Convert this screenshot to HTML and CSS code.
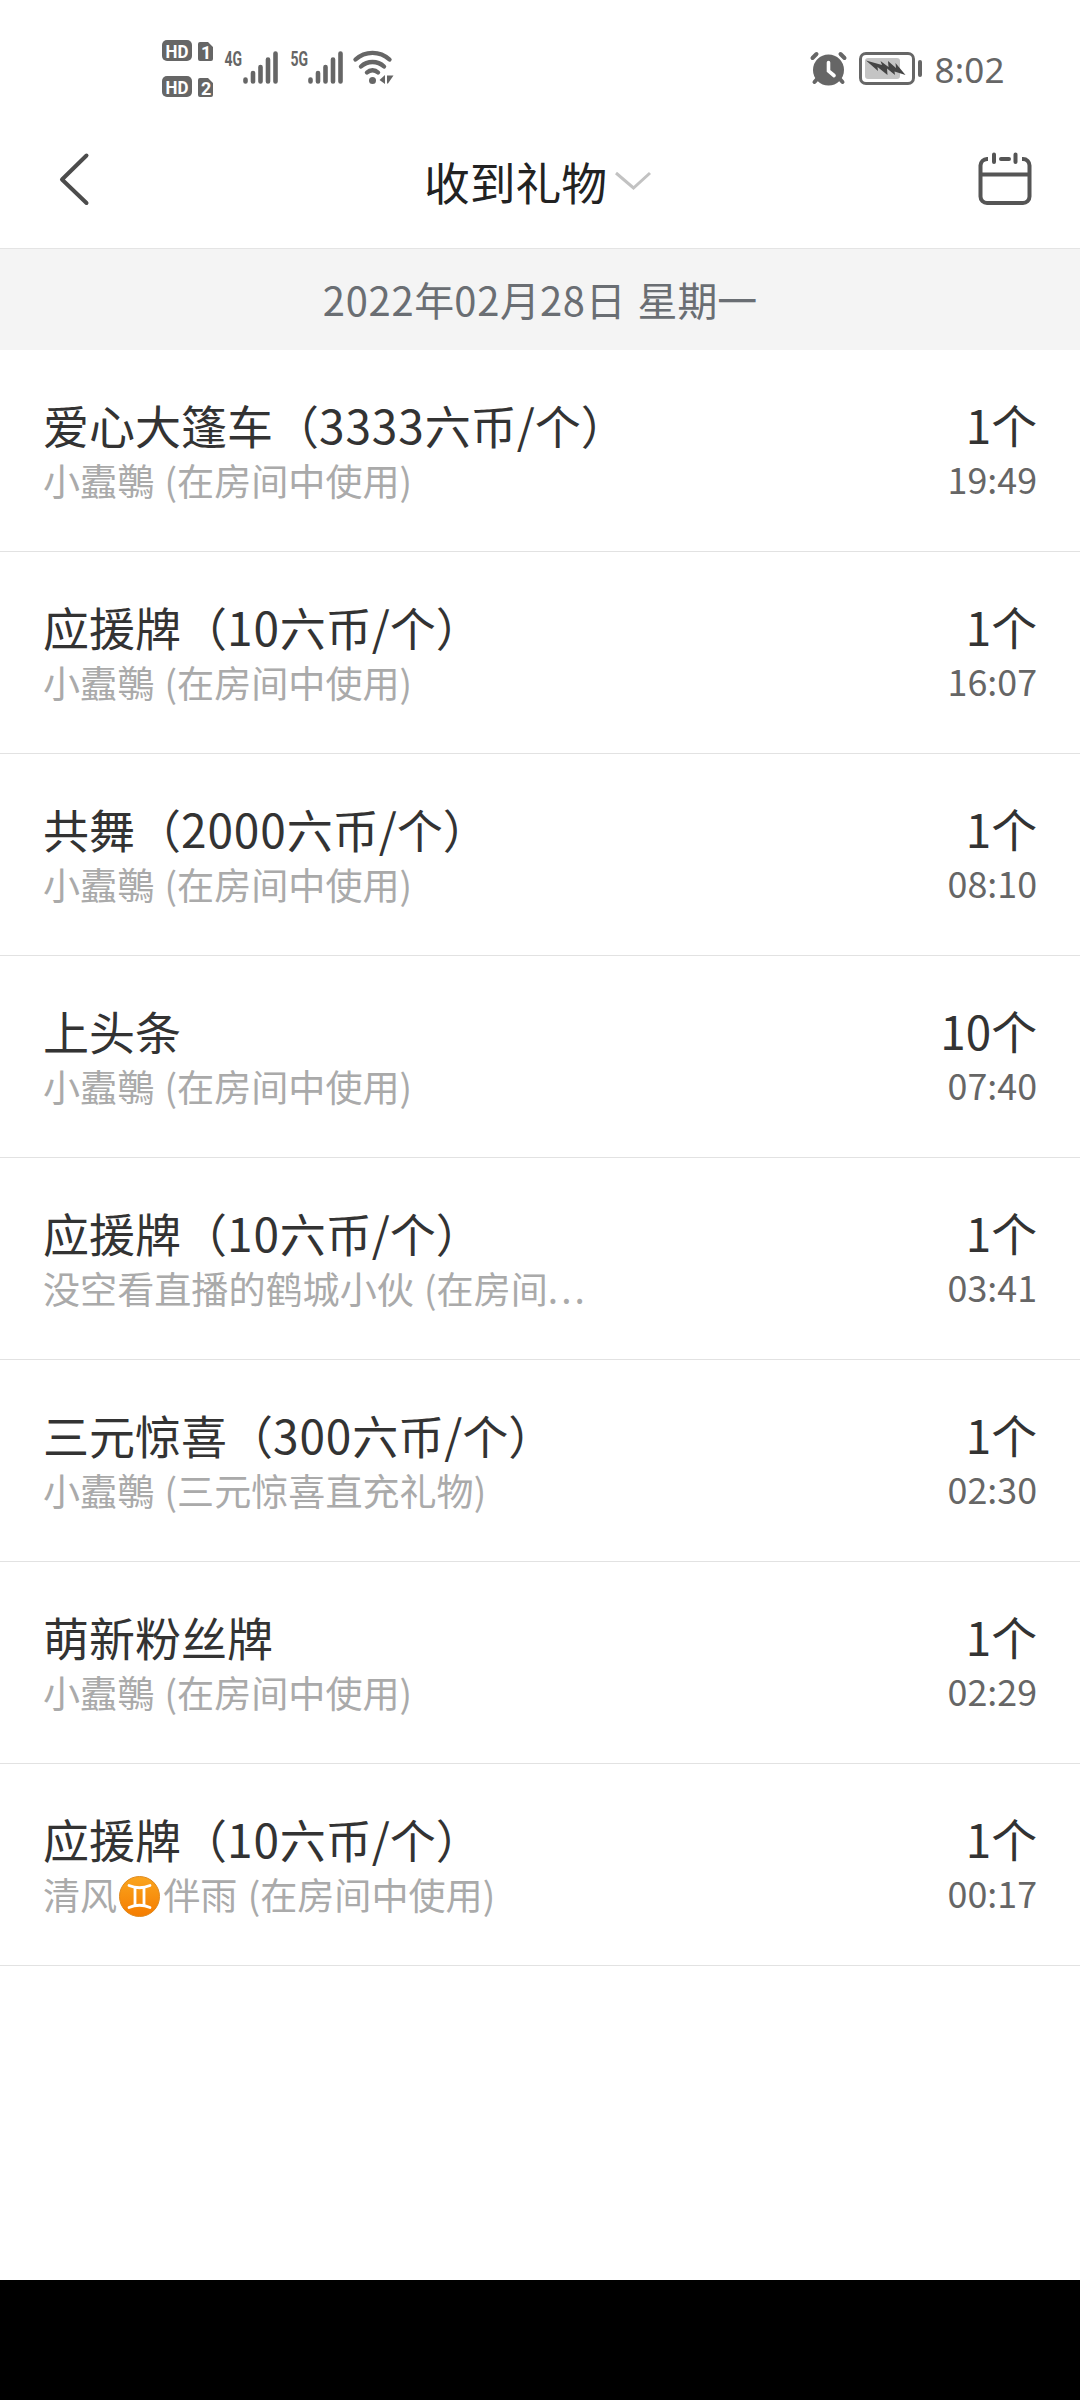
FILE: index.html
```html
<!DOCTYPE html>
<html lang="zh-CN">
<head>
<meta charset="utf-8">
<title>收到礼物</title>
<link rel="stylesheet" href="styles.css">
</head>
<body>
<div class="status">
  <svg class="status-left" width="260" height="80" viewBox="0 0 260 80" fill="#666">
    <rect x="12" y="10" width="30" height="21" rx="5"/>
    <rect x="12" y="46" width="30" height="21" rx="5"/>
    <path d="M50 12h8l5 5v12a2 2 0 0 1-2 2h-11a2 2 0 0 1-2-2v-15a2 2 0 0 1 2-2zM50 48h8l5 5v12a2 2 0 0 1-2 2h-11a2 2 0 0 1-2-2v-15a2 2 0 0 1 2-2z"/>
    <g class="badge" fill="#fff">
      <text transform="translate(15.500 27.500) scale(.94 1)">HD</text>
      <text transform="translate(15.500 63.500) scale(.94 1)">HD</text>
      <text x="51" y="28.500">1</text>
      <text x="51" y="64.500">2</text>
    </g>
    <g class="net">
      <text transform="translate(74.500 35.500) scale(.7 1)">4G</text>
      <text transform="translate(140.500 35.500) scale(.7 1)">5G</text>
    </g>
    <g stroke="#666" stroke-width="4.600" stroke-linecap="round">
      <path d="M95.500 49.500v2M103 43v8.500M110.500 37v14.500M118 29.500v22M125.500 23.500v28"/>
      <path d="M160.500 49.500v2M168 43v8.500M175.500 37v14.500M183 29.500v22M190.500 23.500v28"/>
    </g>
    <g fill="none" stroke="#666" stroke-width="4.400" stroke-linecap="round">
      <path d="M205.500 29.500a25 25 0 0 1 34 0M211 36.500a17 17 0 0 1 23 0M217 42.500a8 8 0 0 1 11 0"/>
    </g>
    <circle cx="222.500" cy="50.500" r="3.500"/>
    <path d="M229.500 50l5.500-5v9zM237 45.500h6.500l-5.500 8h-1z"/>
  </svg>
  <svg class="status-right" width="220" height="60" viewBox="0 0 220 60" fill="#666">
    <circle cx="28.500" cy="30" r="15.500"/>
    <path d="M12.500 18l4-4M40.500 14l4 4M18 38l-3.500 4M39 38l3.500 4" stroke="#666" stroke-width="4" stroke-linecap="round"/>
    <path d="M28.500 22.500v8.500l5.500 4.500" stroke="#fff" stroke-width="3.600" stroke-linecap="round" fill="none"/>
    <rect x="60.500" y="13.500" width="53" height="30" rx="5.500" fill="none" stroke="#666" stroke-width="3"/>
    <rect x="65" y="18" width="35" height="21" rx="3" fill="#c4c4c4"/>
    <path d="M66 20.500l16 4.500-1.500-4 8 6-.500-6 8 7-.500-5 10 12-11-3.500 .500 3.500-8-6.500 .500 6.500-10-8 .500 4z" fill="#444"/>
    <rect x="118" y="20" width="4" height="17" rx="2"/>
    <text class="clock" x="134.500" y="42.500" textLength="70">8:02</text>
  </svg>
</div>
<header class="bar">
  <svg width="80" height="80" viewBox="0 0 80 80"><path d="M46.500 15.500L22 39.500l24.500 23.500" fill="none" stroke="#4c4c4c" stroke-width="4" stroke-linecap="round" stroke-linejoin="round"/></svg>
  <h1 class="bar-title">收到礼物<svg width="40" height="24" viewBox="0 0 40 24"><path d="M3 4l17.500 15L37 4" fill="none" stroke="#c2c2c2" stroke-width="3"/></svg></h1>
  <svg width="80" height="80" viewBox="0 0 80 80" fill="none" stroke="#555" stroke-width="4"><path d="M29 19h-1a7 7 0 0 0-6.500 6.500v31a6.500 6.500 0 0 0 6.500 6.500h36a6.500 6.500 0 0 0 6.500-6.500v-31a6.500 6.500 0 0 0-6.500-6.500h-1M21.500 34.500h49"/><path d="M35 14.500v7.500M56.500 14.500v7.500M42 19h8" stroke-linecap="round"/></svg>
</header>
<div class="date"><span class="num">2022</span>年<span class="num">02</span>月<span class="num">28</span>日 星期一</div>
<ul class="list">
  <li class="row"><div class="main"><div class="name">爱心大篷车（<span class="num">3333</span>六币/个）</div><div class="from">小蠹鷷 (在房间中使用)</div></div><div class="side"><div class="count">1个</div><div class="time">19:49</div></div></li>
  <li class="row"><div class="main"><div class="name">应援牌（<span class="num">10</span>六币/个）</div><div class="from">小蠹鷷 (在房间中使用)</div></div><div class="side"><div class="count">1个</div><div class="time">16:07</div></div></li>
  <li class="row"><div class="main"><div class="name">共舞（<span class="num">2000</span>六币/个）</div><div class="from">小蠹鷷 (在房间中使用)</div></div><div class="side"><div class="count">1个</div><div class="time">08:10</div></div></li>
  <li class="row"><div class="main"><div class="name">上头条</div><div class="from">小蠹鷷 (在房间中使用)</div></div><div class="side"><div class="count">10个</div><div class="time">07:40</div></div></li>
  <li class="row"><div class="main"><div class="name">应援牌（<span class="num">10</span>六币/个）</div><div class="from">没空看直播的鹤城小伙 (在房间<span class="dots">...</span></div></div><div class="side"><div class="count">1个</div><div class="time">03:41</div></div></li>
  <li class="row"><div class="main"><div class="name">三元惊喜（<span class="num">300</span>六币/个）</div><div class="from">小蠹鷷 (三元惊喜直充礼物)</div></div><div class="side"><div class="count">1个</div><div class="time">02:30</div></div></li>
  <li class="row"><div class="main"><div class="name">萌新粉丝牌</div><div class="from">小蠹鷷 (在房间中使用)</div></div><div class="side"><div class="count">1个</div><div class="time">02:29</div></div></li>
  <li class="row"><div class="main"><div class="name">应援牌（<span class="num">10</span>六币/个）</div><div class="from">清风<svg class="gemini" width="41" height="41" viewBox="0 0 41 41"><defs><linearGradient id="orange" x2="0" y2="1"><stop stop-color="#faa51e"/><stop offset="1" stop-color="#f57c00"/></linearGradient></defs><circle cx="20.500" cy="20.500" r="20" fill="url(#orange)" stroke="#df8a20" stroke-width="1"/><path d="M10 9.500q10.500 4.500 21 0M10 31.500q10.500-4.500 21 0M16 11.500v18M25 11.500v18" fill="none" stroke="#fff" stroke-width="2.800" stroke-linecap="round"/></svg>伴雨 (在房间中使用)</div></div><div class="side"><div class="count">1个</div><div class="time">00:17</div></div></li>
</ul>
<div class="navbar"></div>
</body>
</html>
```
FILE: styles.css
```css
* { box-sizing: border-box; }
body {
  margin: 0;
  width: 1080px;
  height: 2400px;
  display: flex;
  flex-direction: column;
  background: #fff;
  color: #333;
  font-family: "Noto Sans CJK SC", sans-serif;
  white-space: nowrap;
}
svg { display: block; flex: none; }
.status {
  height: 140px;
  padding: 30px 60px 0 150px;
  display: flex;
  justify-content: space-between;
}
.status-right { margin-top: 10px; }
.badge { font: bold 18px Roboto, sans-serif; }
.net { font: bold 20px Roboto, sans-serif; }
.clock { font: 35px "Noto Sans", sans-serif; }
.bar {
  height: 108px;
  padding: 0 40px;
  display: grid;
  grid-template-columns: 80px 1fr 80px;
}
.bar > svg:last-child { margin-left: -1px; }
.bar-title {
  margin: 0;
  height: 82px;
  padding-right: 3px;
  display: flex;
  align-items: center;
  justify-content: center;
  gap: 6px;
  font-size: 45.800px;
  line-height: 78px;
  font-weight: 400;
  color: #222;
}
.date {
  height: 102px;
  border-top: 1px solid #e4e4e4;
  background: #f4f4f4;
  color: #6a6e73;
  font-size: 39.900px;
  line-height: 100px;
  text-align: center;
  word-spacing: 3px;
}
.num { letter-spacing: .019em; }
.list { margin: 0; padding: 0; list-style: none; flex: 1; }
.row {
  height: 202px;
  padding: 40px 43px 0;
  display: flex;
  justify-content: space-between;
  border-bottom: 1px solid #e2e2e2;
}
.name, .count { font-size: 45.800px; line-height: 68px; height: 63px; }
.name { font-size: 46px; }
.from {
  display: flex;
  font-size: 37.100px;
  line-height: 54px;
  color: #aaa;
  white-space: pre;
  word-spacing: 2px;
}
.dots { letter-spacing: 3px; }
.side { text-align: right; }
.time { color: #666; font-size: 35.800px; line-height: 51px; }
.gemini { margin: 9px 3px 0 2px; }
.navbar { height: 120px; background: #000; }
```
